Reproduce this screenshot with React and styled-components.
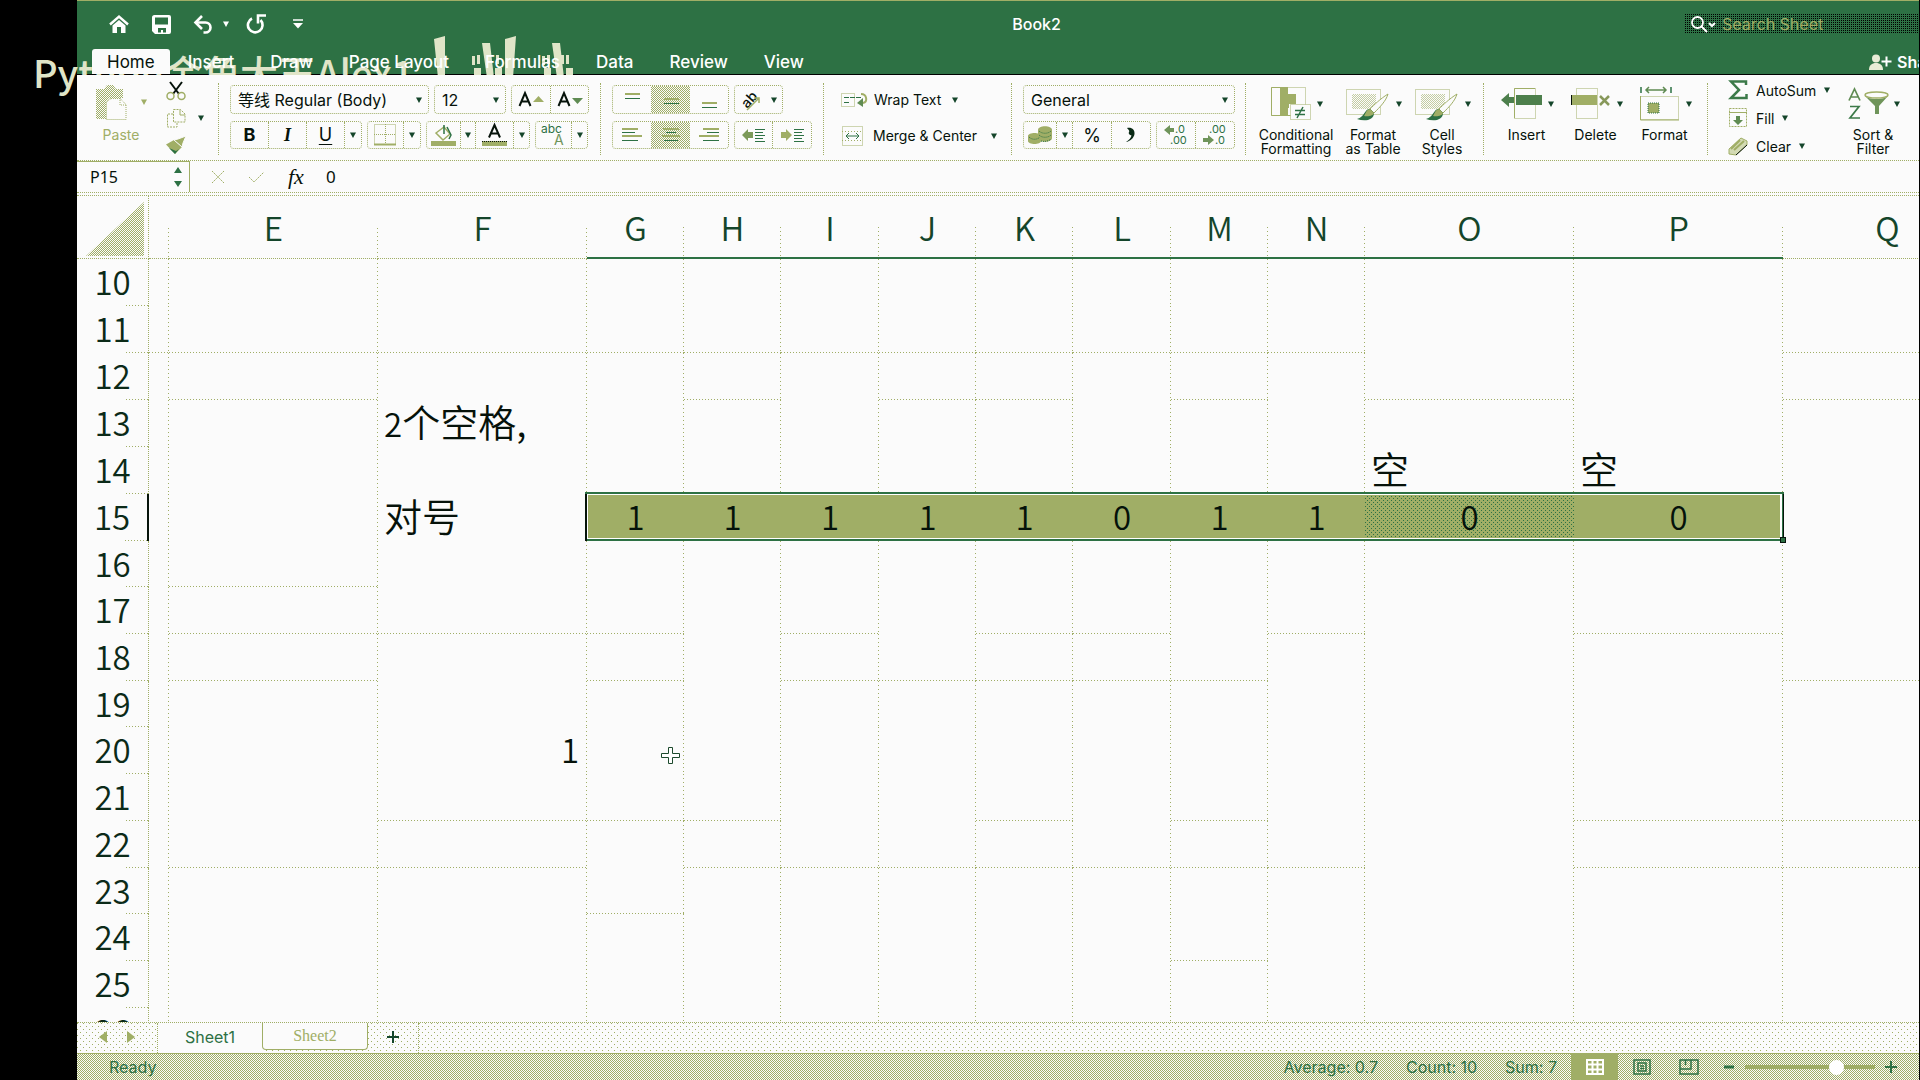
import React from "react";
import styled, { createGlobalStyle, css } from "styled-components";

const GREEN = "#2d7144";
const OLIVE = "#a0ae66";
const PAPER = "#fbfbfb";
const INK = "#06120a";

const UI = '"Inter", "Noto Sans CJK SC", sans-serif';
const SHEET = '"Noto Sans CJK SC", "Noto Sans", sans-serif';

const halftone = css`
  background-image: repeating-conic-gradient(${OLIVE} 0 25%, ${PAPER} 0 50%);
  background-size: 2px 2px;
`;
const speckle = css`
  background-image: conic-gradient(at 1px 1px, transparent 75%, ${OLIVE} 0),
    conic-gradient(at 1px 1px, transparent 75%, ${OLIVE} 0);
  background-size: 6px 6px;
  background-position: 0 0, 3px 3px;
`;

const Global = createGlobalStyle`
  *, *::before, *::after { box-sizing: border-box; }
  body { margin: 0; background: #000; overflow: hidden; }
  button, input, select { font: inherit; color: inherit; margin: 0; }
  button { padding: 0; border: 0; background: none; display: flex; align-items: center; justify-content: center; }
  svg { display: block; flex: none; overflow: visible; }
`;

const Screen = styled.div`
  position: relative;
  height: 100vh;
  padding: 0 1px 0 77px;
  background: #000;
  font-family: ${UI};
  color: ${INK};
`;
const Window = styled.div`
  height: 100%;
  display: flex;
  flex-direction: column;
  overflow: hidden;
  background: ${PAPER};
`;

/* ---------- title bar and tabs ---------- */
const Header = styled.header`
  background: ${GREEN};
  border-top: 1px solid ${OLIVE};
  border-bottom: 1px solid #000;
  color: #fff;
`;
const TitleBar = styled.div`
  display: grid;
  grid-template-columns: minmax(0, 100fr) auto minmax(0, 95fr);
  align-items: center;
  height: 46px;
  padding-left: 32px;
`;
const QuickAccess = styled.div`
  display: flex;
  align-items: center;
`;
const QuickButton = styled.button`
  width: ${(p) => p.$w || 20}px;
  height: 22px;
  margin-right: ${(p) => p.$gap || 0}px;
`;
const Title = styled.h1`
  margin: 0;
  font-size: 16px;
  font-weight: 500;
  line-height: 20px;
`;
const SearchBox = styled.label`
  justify-self: end;
  display: flex;
  align-items: center;
  gap: 6px;
  width: 234px;
  height: 20px;
  padding-left: 6px;
  background-image: conic-gradient(at 1px 1px, transparent 75%, #000 0);
  background-size: 2px 2px;
`;
const SearchInput = styled.input`
  min-width: 0;
  flex: 1;
  border: 0;
  padding: 0;
  background: none;
  font-size: 16px;
  line-height: 20px;
  color: ${OLIVE};
  &::placeholder { color: ${OLIVE}; opacity: 1; }
`;
const TabRow = styled.nav`
  position: relative;
  z-index: 2;
  display: flex;
  height: 27px;
  padding: 2px 0 0 15px;
`;
const Tab = styled.button`
  padding: 0 ${(p) => (p.$active ? 15 : 18)}px;
  font-size: 17px;
  font-weight: ${(p) => (p.$active ? 400 : 500)};
  line-height: 20px;
  ${(p) => p.$active && css`background: ${PAPER}; color: ${INK}; border-radius: 3px 3px 0 0;`}
`;
const ShareButton = styled.button`
  width: 50px;
  margin-left: auto;
  justify-content: flex-start;
  gap: 6px;
  overflow: hidden;
  font-size: 16px;
  font-weight: 600;
`;
const Watermark = styled.div`
  position: absolute;
  z-index: 1;
  left: 33px;
  top: 44px;
  display: flex;
  font-family: ${SHEET};
  font-size: 38px;
  font-weight: 500;
  line-height: 56px;
  color: #e0e5c8;
  white-space: nowrap;
  pointer-events: none;
`;
const Logo = styled.svg`
  position: absolute;
  left: 396px;
  top: -12px;
`;

/* ---------- ribbon ---------- */
const Ribbon = styled.div`
  position: relative;
  z-index: 2;
  display: flex;
  height: 86px;
  padding-top: 8px;
  background: ${PAPER};
  border-bottom: 1px dotted ${OLIVE};
  font-size: 14px;
  overflow: hidden;
`;
const Group = styled.div`
  display: flex;
  flex: none;
  align-items: flex-start;
  padding: 0 ${(p) => p.$right || 11}px 0 ${(p) => p.$left || 11}px;
  border-right: 1px dotted ${OLIVE};
  height: 72px;
  &:last-child { border-right: 0; }
`;
const Stack = styled.div`
  display: flex;
  flex-direction: column;
  gap: 7px;
  padding-top: 2px;
`;
const Line = styled.div`
  display: flex;
  gap: 5px;
  height: ${(p) => p.$h || 29}px;
`;
const ButtonGroup = styled.div`
  display: flex;
  border: 1px dotted ${OLIVE};
  border-radius: 4px;
`;
const Tool = styled.button`
  width: ${(p) => p.$w}px;
  font-size: 18px;
  ${(p) => p.$pressed && halftone}
  ${(p) => p.$line && css`border-right: 1px dotted ${OLIVE};`}
  b, i, u { line-height: 20px; }
  i { font-family: "Liberation Serif", serif; font-weight: 700; }
  u { text-underline-offset: 3px; }
`;
const SelectWrap = styled.span`
  position: relative;
  width: ${(p) => p.$w}px;
  svg { position: absolute; right: 7px; top: 12px; }
`;
const Select = styled.select`
  appearance: none;
  width: 100%;
  height: 29px;
  padding: 0 0 0 7px;
  border: 1px dotted ${OLIVE};
  border-radius: 4px;
  background: transparent;
  font-size: 16px;
`;
const PasteButton = styled.button`
  flex-direction: column;
  gap: 6px;
  padding-top: 1px;
  width: 52px;
  color: ${OLIVE};
`;
const PasteIcon = styled.span`
  display: flex;
  align-items: center;
  gap: 14px;
`;
const ClipColumn = styled.div`
  display: flex;
  flex-direction: column;
  gap: 7px;
  margin: -2px 0 0 19px;
  width: 41px;
`;
const ClipButton = styled.button`
  height: 20px;
  gap: 12px;
  justify-content: flex-start;
`;
const TextTool = styled.button`
  height: 29px;
  gap: ${(p) => p.$gap || 9}px;
  justify-content: flex-start;
  white-space: nowrap;
  svg:last-child { margin-left: 5px; }
`;
const BigTool = styled.button`
  flex-direction: column;
  justify-content: flex-start;
  width: ${(p) => p.$w}px;
  line-height: 14px;
  padding-top: 3px;
`;
const BigIcon = styled.span`
  display: flex;
  align-items: center;
  gap: 6px;
  height: 36px;
  margin: 0 0 6px 2px;
`;
const EditColumn = styled.div`
  display: flex;
  flex-direction: column;
  width: 114px;
  margin-top: -7px;
`;
const EditTool = styled.button`
  height: 28px;
  gap: 8px;
  justify-content: flex-start;
`;

/* ---------- formula bar ---------- */
const FormulaBar = styled.div`
  display: flex;
  align-items: center;
  height: 35px;
  border-bottom: 1px dotted ${OLIVE};
`;
const FormulaInner = styled.div`
  display: flex;
  align-items: center;
  flex: 1;
  height: 32px;
  margin-bottom: 2px;
  border-bottom: 1px dotted ${OLIVE};
`;
const NameBox = styled.label`
  display: flex;
  align-items: center;
  width: 113px;
  height: 100%;
  padding: 0 7px 0 13px;
  border: 1px solid ${OLIVE};
  border-width: 1px 1px 0 0;
`;
const NameInput = styled.input`
  min-width: 0;
  flex: 1;
  border: 0;
  padding: 0;
  background: none;
  font-family: "Noto Sans", sans-serif;
  font-size: 16px;
`;
const FormulaButtons = styled.div`
  display: flex;
  align-items: center;
  gap: 23px;
  padding: 0 22px 0 21px;
`;
const Fx = styled.span`
  font-family: "Liberation Serif", serif;
  font-style: italic;
  font-size: 22px;
  line-height: 24px;
`;
const FormulaInput = styled.input`
  flex: 1;
  border: 0;
  padding: 0;
  background: none;
  font-family: "Noto Sans", sans-serif;
  font-size: 17px;
`;

/* ---------- worksheet ---------- */
const SheetArea = styled.main`
  position: relative;
  flex: 1;
  min-height: 0;
  overflow: hidden;
`;
const Table = styled.table`
  table-layout: fixed;
  width: 1914px;
  border-collapse: separate;
  border-spacing: 0;
  font-family: ${SHEET};
  font-weight: 350;
  font-size: 33px;
  line-height: 40px;
`;
const ColHead = styled.th`
  height: 63px;
  padding: 0;
  font-weight: inherit;
  color: #14452a;
  border-bottom: ${(p) => (p.$on ? `2px solid ${GREEN}` : `1px dotted ${OLIVE}`)};
  background-image: repeating-linear-gradient(${OLIVE} 0 1px, transparent 1px 4px);
  background-size: 1px 30px;
  background-position: right bottom;
  background-repeat: no-repeat;
`;
const Corner = styled.th`
  padding: 0 4px 2px;
  vertical-align: bottom;
  border-right: 1px dotted ${OLIVE};
  border-bottom: 1px dotted ${OLIVE};
`;
const Triangle = styled.div`
  height: 54px;
  margin-left: 5px;
  clip-path: polygon(100% 0, 100% 100%, 0 100%);
  ${halftone}
`;
const RowHead = styled.th`
  height: ${(p) => p.$h}px;
  padding: 0 0 3px;
  font-weight: inherit;
  color: #0b2a18;
  border-right: ${(p) => (p.$on ? "2px solid #06140b" : `1px dotted ${OLIVE}`)};
  background-image: repeating-linear-gradient(90deg, ${OLIVE} 0 1px, transparent 1px 3px);
  background-size: 22px 1px;
  background-position: right bottom;
  background-repeat: no-repeat;
`;
const Cell = styled.td`
  padding: 0 8px 3px 6px;
  text-align: ${(p) => p.$align || "left"};
  white-space: nowrap;
  background-image: repeating-linear-gradient(${OLIVE} 0 1px, transparent 1px 4px),
    repeating-linear-gradient(90deg, ${OLIVE} 0 1px, transparent 1px 3px);
  background-size: 1px 100%, ${(p) => (p.$rule ? "100%" : "0")} 1px;
  background-position: right top, left bottom;
  background-repeat: no-repeat;
`;
const Picked = styled.td`
  position: relative;
  padding: 0 0 3px;
  text-align: center;
  background-color: ${OLIVE};
  color: #04120a;
  ${(p) =>
    p.$shade &&
    css`
      background-image: conic-gradient(at 1px 1px, transparent 75%, ${GREEN} 0),
        conic-gradient(at 1px 1px, transparent 75%, ${GREEN} 0);
      background-size: 4px 4px;
      background-position: 0 0, 2px 2px;
    `}
  box-shadow: 0 -2px ${GREEN}, inset 0 -2px ${GREEN},
    ${(p) => p.$edge === "first" && `-2px 0 #06140b, -2px -2px ${GREEN}, `}
    ${(p) => p.$edge === "last" && `1px 0 #06140b, 1px -2px ${GREEN}, inset -1px 0 ${GREEN}, `}
    ${(p) => p.$edge === "first" && "inset 1px 0 #fff, "}
    ${(p) => p.$edge === "last" && "inset -3px 0 #fff, "}
    inset 0 1px #fff, inset 0 -3px #fff;
`;
const FillHandle = styled.i`
  position: absolute;
  right: -3px;
  bottom: -2px;
  width: 6px;
  height: 6px;
  background: ${GREEN};
  border: 1px solid #06140b;
`;
const Han = styled.span`
  font-size: 38px;
`;
const Pointer = styled.svg`
  position: absolute;
  left: 584px;
  top: 550px;
`;

/* ---------- sheet tabs and status bar ---------- */
const SheetTabs = styled.div`
  display: flex;
  flex: none;
  height: 31px;
  border-top: 1px dotted ${OLIVE};
  ${speckle}
`;
const SheetNav = styled.div`
  display: flex;
  align-items: center;
  gap: 20px;
  width: 81px;
  padding: 0 0 2px 22px;
  border-right: 1px dotted ${OLIVE};
`;
const SheetTab = styled.button`
  width: ${(p) => (p.$active ? 106 : 104)}px;
  height: ${(p) => (p.$active ? 27 : 30)}px;
  padding-bottom: 2px;
  font-size: 16px;
  color: ${GREEN};
  background: ${PAPER};
  ${(p) =>
    p.$active &&
    css`
      padding-bottom: 0;
      font-family: "Liberation Serif", serif;
      color: ${OLIVE};
      border: 1px solid ${OLIVE};
      border-top: 0;
      border-radius: 0 0 4px 4px;
    `}
`;
const AddSheet = styled.button`
  width: 51px;
  padding-bottom: 2px;
  border-right: 1px dotted ${OLIVE};
`;
const StatusBar = styled.footer`
  display: flex;
  flex: none;
  align-items: center;
  height: 27px;
  padding: 0 22px 0 32px;
  border-top: 1px solid ${OLIVE};
  ${halftone}
  font-size: 16px;
  color: ${GREEN};
`;
const Totals = styled.div`
  display: flex;
  gap: 28px;
  margin: 0 14px 0 auto;
`;
const ViewButton = styled.button`
  width: 47px;
  height: 26px;
  ${(p) => p.$active && css`background: ${OLIVE};`}
`;
const ZoomGroup = styled.div`
  display: flex;
  align-items: center;
  gap: 10px;
  margin-left: 11px;
`;
const Zoom = styled.input`
  appearance: none;
  width: 130px;
  height: 16px;
  background: linear-gradient(${OLIVE}, ${OLIVE}) center / 100% 4px no-repeat;
  &::-webkit-slider-thumb {
    appearance: none;
    width: 15px;
    height: 15px;
    border-radius: 50%;
    background: #fff;
  }
`;

/* ---------- drawings ---------- */
const Caret = ({ c = "#14452a" }) => (
  <svg width="6" height="6" viewBox="0 0 6 6"><path d="M0 0.5h6L3 6z" fill={c} /></svg>
);
const I = ({ w, h, children, ...r }) => (
  <svg width={w} height={h} viewBox={`0 0 ${w} ${h}`} fill="none" aria-hidden="true" {...r}>{children}</svg>
);
const Bars = ({ rows, c = GREEN }) => (
  <I w={20} h={16}>
    {rows.map(([x1, x2, y], i) => <path key={i} d={`M${x1} ${y}H${x2}`} stroke={i % 2 ? c : OLIVE} strokeWidth={i % 2 ? 1 : 2} />)}
  </I>
);
const Frame = ({ x, y, w, h }) => (
  <rect x={x + 0.5} y={y + 0.5} width={w} height={h} stroke={OLIVE} strokeDasharray="1 1" />
);
const HomeIcon = () => (
  <I w={20} h={18}><path d="M1 9.5L10 1.5l9 8" stroke="#fff" strokeWidth="2.4" /><path d="M3.5 10.5L10 5l6.5 5.5V18H12v-6H8v6H3.500z" fill="#fff" /></I>
);
const SaveIcon = () => (
  <I w={19} h={19}><path d="M2.500 0H17a2 2 0 012 2v15a2 2 0 01-2 2H3l-3-3V2.500A2.500 2.500 0 012.500 0z" fill="#fff" /><path d="M3 2.500h13v7H3zM6 13h8v4.500H11V15H9v2.500H6z" fill={GREEN} /></I>
);
const UndoIcon = () => (
  <I w={20} h={19}><path d="M3 7.500h9.500a5 5 0 010 10H10.500" stroke="#fff" strokeWidth="2.600" /><path d="M9 1L2.500 7.500 9 14" stroke="#fff" strokeWidth="2.600" /></I>
);
const RedoIcon = () => (
  <I w={20} h={20}><path d="M5 4.500a7.300 7.300 0 108.500 1.500" stroke="#fff" strokeWidth="2.600" /><path d="M19 1.500h-8v8" stroke="#fff" strokeWidth="2.600" /></I>
);
const MoreIcon = () => (
  <I w={10} h={10}><path d="M0 1h10" stroke="#fff" strokeWidth="1.500" /><path d="M0 4h10L5 9.500z" fill="#fff" /></I>
);
const SearchIcon = () => (
  <I w={25} h={17}><circle cx="6.500" cy="6.500" r="5.500" stroke="#fff" strokeWidth="1.800" /><path d="M10.500 10.500L16 16" stroke="#fff" strokeWidth="2" /><path d="M18 7l3 3 3-3" stroke="#fff" strokeWidth="2" /></I>
);
const ShareIcon = () => (
  <I w={22} h={16}><circle cx="7" cy="4.500" r="4" fill="#e8ecd6" /><path d="M0 16c0-5 3-7 7-7s7 2 7 7z" fill="#e8ecd6" /><path d="M17.500 2.500v10M12.500 7.500h10" stroke="#fff" strokeWidth="2" /></I>
);
const Clipboard = () => (
  <I w={32} h={36}><defs><pattern id="dots" width="2" height="2" patternUnits="userSpaceOnUse"><rect width="1" height="1" fill={OLIVE} /><rect x="1" y="1" width="1" height="1" fill={OLIVE} /></pattern></defs>
    <path d="M1 5h8l3-4h6l3 4h7v9H15l-4 4v17H1z" fill="url(#dots)" /><path d="M16 14.500h9l6 6v15H11.500V18z" fill={PAPER} stroke={OLIVE} strokeDasharray="1 1" /><path d="M25 14v7h6" stroke={OLIVE} strokeDasharray="1 1" /></I>
);
const Scissors = () => (
  <I w={20} h={20}><path d="M4 1l9 12M16 1L7 13" stroke={INK} strokeWidth="2" /><circle cx="4.500" cy="15" r="3.500" stroke={OLIVE} strokeWidth="1.500" /><circle cx="15.500" cy="15" r="3.500" stroke={OLIVE} strokeWidth="1.500" /></I>
);
const Copy = () => (
  <I w={20} h={20}><path d="M7.500 1.500h7l4.500 4.500v8H7.500zM7 6H1.500v13H11v-4" stroke={OLIVE} strokeDasharray="2 1" /><path d="M14 2v5h5" stroke={OLIVE} /></I>
);
const Brush = () => (
  <I w={22} h={18}><path d="M0 8.500L8 4l8 7-7 7z" fill={OLIVE} /><path d="M3 12l7 3 3-2-4 5z" fill={GREEN} /><path d="M8 4l4-1 8-3-3 7-1 4z" fill={OLIVE} stroke={PAPER} /></I>
);
const GrowA = ({ up }) => (
  <I w={26} h={20}><path d="M1.500 16L7 3l5.500 13M3.500 11.500h7" stroke={INK} strokeWidth="2" /><path d={up ? "M15 12l5.500-6 5.500 6z" : "M15 8l5.500 6L26 8z"} fill={up ? OLIVE : "#5f8b52"} /></I>
);
const BorderIcon = () => (
  <I w={23} h={22}><Frame x={0} y={0} w={21} h={20} /><path d="M11.500 0v20M0 10.500h22" stroke={OLIVE} strokeDasharray="1 1" /><path d="M0 20.500h22" stroke={OLIVE} strokeWidth="2" /></I>
);
const BucketIcon = () => (
  <I w={25} h={22}><path d="M5 9l8-6 6 7-7 6z" stroke={OLIVE} strokeWidth="1.500" /><path d="M13 1v9M16 3l4 8-2 4" stroke={GREEN} strokeWidth="1.500" /><rect y="17" width="25" height="5" fill={OLIVE} /></I>
);
const FontColor = () => (
  <I w={25} h={22}><path d="M7 13.500L12.500 1 18 13.500M9 9.500h7" stroke={INK} strokeWidth="2" /><rect y="17" width="25" height="5" fill={OLIVE} /><path d="M0 17.500h25" stroke={INK} strokeDasharray="1 1" /></I>
);
const AngleIcon = () => (
  <I w={24} h={24}><text x="3" y="17" fontSize="14" fontWeight="500" fill={INK} transform="rotate(-48 10 13)">ab</text><path d="M8 22L20 10M15 10h5v5" stroke={OLIVE} strokeWidth="1.500" /></I>
);
const Indent = ({ right }) => (
  <I w={23} h={14}><path d={right ? "M0 4h5V1l6 6-6 6v-3H0z" : "M11 4H6V1L0 7l6 6v-3h5z"} fill={right ? OLIVE : "#7c9a5a"} /><path d="M13 1.500h10M13 4.500h8M13 7.500h10M13 10.500h8M13 13.500h10" stroke={GREEN} /></I>
);
const WrapIcon = () => (
  <I w={27} h={16}><Frame x={0} y={1} w={13} h={13} /><path d="M3 5.500h18M3 10.500h6" stroke={GREEN} strokeDasharray="5 1" /><path d="M20 2c6 0 7 8 2 9" stroke={OLIVE} strokeWidth="2" /><path d="M22 6v9l-6-4z" fill="#5f8b52" /></I>
);
const MergeIcon = () => (
  <I w={23} h={20}><Frame x={1} y={0} w={20} h={19} /><path d="M1 5.500h21M1 14.500h21" stroke={OLIVE} strokeDasharray="1 2" /><path d="M5 10h13M8 7l-3 3 3 3M15 7l3 3-3 3" stroke={GREEN} /></I>
);
const Coins = () => (
  <I w={25} h={18}><path d="M10 4c0-5 14-5 14 0v8c0 5-14 5-14 0z" fill={OLIVE} /><path d="M0 10c0-4 13-4 13 0v5c0 4-13 4-13 0z" fill={OLIVE} /><path d="M11 5c3 3 9 3 12 0M11 9c3 3 9 3 12 0M1 11c3 3 8 3 11 0M13 15c4 1 8 0 10-2" stroke={GREEN} strokeDasharray="1 1" /></I>
);
const CommaIcon = () => (
  <I w={10} h={14}><path d="M1 0c5-1 8 2 7.500 6C8 10 4 13.500 0 14c3-2 5-4 5.500-6.500C4 7 2 6 3 4 4 3 2 1 1 0z" fill="#0a2a16" /></I>
);
const Decimals = ({ more }) => (
  <I w={24} h={20}><text x={more ? 11 : 6} y="8" fontSize="11" fill={GREEN}>{more ? ".0" : ".00"}</text><text x={more ? 6 : 12} y="19" fontSize="11" fill={GREEN}>{more ? ".00" : ".0"}</text>
    <path d={more ? "M10 3H6V0L0 5l6 5V7h4z" : "M0 13h5v-3l6 5-6 5v-3H0z"} fill="#6f945a" /></I>
);
const CondIcon = () => (
  <I w={40} h={34}><path d="M.5 28.500V.5H9" stroke={OLIVE} /><path d="M.5 28.500H20" stroke={OLIVE} /><Frame x={0} y={0} w={34} h={28} /><path d="M9 0h8v7h8v10h-7v4h-1v8H9z" fill={OLIVE} /><rect x="19.500" y="17.500" width="20" height="15" fill={PAPER} stroke={OLIVE} strokeDasharray="1 1" /><path d="M24 23.500h10M24 27.500h10M32 20l-6 11" stroke={GREEN} strokeWidth="1.500" /></I>
);
const TableBrush = () => (
  <I w={44} h={34}><Frame x={0} y={2} w={34} h={25} /><rect x="6" y="7" width="24" height="15" fill="url(#dots)" opacity=".6" /><path d="M42 7C34 12 28 18 24 22l4 4C34 20 40 14 42 7z" fill={PAPER} stroke={OLIVE} /><path d="M24 22c-6 0-5 8-13 10 8 3 17 1 17-6z" fill={GREEN} /><path d="M24 22c-4 1-4 4-6 7 5 1 10-1 10-3z" fill={OLIVE} /></I>
);
const InsertIcon = () => (
  <I w={41} h={32}><path d="M13.500 30V.5H34" stroke={OLIVE} /><Frame x={13} y={0} w={21} h={30} /><rect x="15" y="7" width="26" height="10" fill="#4d7f4c" /><path d="M13 9H8V5L0 12l8 7v-4h5z" fill="#4d7f4c" /></I>
);
const DeleteIcon = () => (
  <I w={40} h={32}><Frame x={5} y={0} w={21} h={30} /><rect x="1" y="7" width="25" height="10" fill={OLIVE} /><path d="M.5 7v10" stroke={INK} /><path d="M29 8l9 9M38 8l-9 9" stroke="#87985a" strokeWidth="2.500" /></I>
);
const FormatIcon = () => (
  <I w={40} h={34}><path d="M1 0v6M31 0v6" stroke={GREEN} strokeWidth="1.500" /><path d="M6 3h20M9 0L6 3l3 3M23 0l3 3-3 3" stroke="#5f8b52" strokeWidth="1.500" /><Frame x={0} y={9} w={38} h={23} /><path d="M.5 9v24H39" stroke={OLIVE} /><rect x="8" y="16" width="11" height="10" fill={OLIVE} stroke={GREEN} strokeDasharray="1 1" /></I>
);
const SigmaIcon = () => (
  <I w={19} h={20}><path d="M17 5V1.500H2L10 10l-8 8h15.500V14" stroke="#3c7a49" strokeWidth="2.500" /></I>
);
const FillIcon = () => (
  <I w={19} h={20}><rect x=".5" y=".5" width="17" height="18" stroke={OLIVE} strokeDasharray="2 1" /><path d="M0 4.500h18" stroke={OLIVE} /><path d="M7 8h4v4h3l-5 5-5-5h3z" fill="#5f8b52" /></I>
);
const EraserIcon = () => (
  <I w={19} h={19}><path d="M0 12L12 1l6 3v4L7 18 0 17z" fill="#d3dab4" stroke={OLIVE} /><path d="M2 12L11 3M5 13L15 4" stroke={OLIVE} strokeWidth="2" /><path d="M18 8L7 18" stroke={INK} /></I>
);
const SortIcon = () => (
  <I w={40} h={32}><path d="M1 12.500L6.500 1 12 12.500M3 9h7" stroke="#5f8b52" strokeWidth="1.700" /><path d="M2 18.500h9L2 30h10" stroke="#3c7a49" strokeWidth="1.700" /><path d="M17 8c4 4 19 4 23 0l-9 10v8h-4v-8z" fill="#6f945a" /><ellipse cx="28.500" cy="7" rx="11.500" ry="3" fill={PAPER} stroke={OLIVE} strokeWidth="1.500" /></I>
);
const Grid = ({ c }) => (
  <I w={18} h={16}><path d="M1 1h16v14H1zM1 5.500h16M1 10.500h16M6.500 1v14M11.500 1v14" stroke={c} strokeWidth="2" /></I>
);

/* ---------- data ---------- */
const COLUMNS = [
  ["D", 20], ["E", 209], ["F", 209], ["G", 97], ["H", 97], ["I", 98], ["J", 97],
  ["K", 97], ["L", 98], ["M", 97], ["N", 97], ["O", 209], ["P", 209], ["Q", 209],
];
const ROWS = Array.from({ length: 17 }, (_, i) => i + 10);
const SHORT_ROWS = [16, 19, 23];
const RULES = {
  11: "DEFGHIJKLMNQ", 12: "EHJKMOQ", 16: "E", 17: "EFGIKLNP", 18: "EGIJKLMQ",
  21: "FGHKMPQ", 22: "EFHIJKLMNPQ", 23: "G", 24: "M",
};
const SELECTED = { G: 1, H: 1, I: 1, J: 1, K: 1, L: 0, M: 1, N: 1, O: 0, P: 0 };
const CELLS = {
  F13: <>2<Han>个空格,</Han></>,
  F15: <Han>对号</Han>,
  O14: <Han>空</Han>,
  P14: <Han>空</Han>,
  F20: 1,
};
const TABS = ["Home", "Insert", "Draw", "Page Layout", "Formulas", "Data", "Review", "View"];

function RibbonBar() {
  return (
    <Ribbon role="toolbar" aria-label="Home">
      <Group $left={18}>
        <PasteButton><PasteIcon><Clipboard /><Caret c={OLIVE} /></PasteIcon><span>Paste</span></PasteButton>
        <ClipColumn>
          <ClipButton aria-label="Cut"><Scissors /></ClipButton>
          <ClipButton aria-label="Copy"><Copy /><Caret /></ClipButton>
          <ClipButton aria-label="Format painter"><Brush /></ClipButton>
        </ClipColumn>
      </Group>
      <Group>
        <Stack>
          <Line>
            <SelectWrap $w={199}>
              <Select aria-label="Font"><option>等线 Regular (Body)</option></Select><Caret />
            </SelectWrap>
            <SelectWrap $w={72}>
              <Select aria-label="Font size"><option>12</option></Select><Caret />
            </SelectWrap>
            <ButtonGroup>
              <Tool $w={39} $line aria-label="Increase font size"><GrowA up /></Tool>
              <Tool $w={37} aria-label="Decrease font size"><GrowA /></Tool>
            </ButtonGroup>
          </Line>
          <Line $h={28}>
            <ButtonGroup>
              <Tool $w={38} $line aria-label="Bold"><b>B</b></Tool>
              <Tool $w={38} $line aria-label="Italic"><i>I</i></Tool>
              <Tool $w={38} $line aria-label="Underline"><u>U</u></Tool>
              <Tool $w={16} aria-label="Underline options"><Caret /></Tool>
            </ButtonGroup>
            <ButtonGroup>
              <Tool $w={36} $line aria-label="Borders"><BorderIcon /></Tool>
              <Tool $w={16} aria-label="Border options"><Caret /></Tool>
            </ButtonGroup>
            <ButtonGroup>
              <Tool $w={34} $line aria-label="Fill color"><BucketIcon /></Tool>
              <Tool $w={15} $line aria-label="Fill color options"><Caret /></Tool>
              <Tool $w={38} $line aria-label="Font color"><FontColor /></Tool>
              <Tool $w={15} aria-label="Font color options"><Caret /></Tool>
            </ButtonGroup>
            <ButtonGroup>
              <Tool $w={36} $line aria-label="Phonetic guide">
                <I w={26} h={22}><text x="0" y="9" fontSize="12" fill={GREEN}>abc</text><text x="13" y="21" fontSize="14" fill="#6f945a">A</text></I>
              </Tool>
              <Tool $w={15} aria-label="Phonetic options"><Caret /></Tool>
            </ButtonGroup>
          </Line>
        </Stack>
      </Group>
      <Group>
        <Stack>
          <Line>
            <ButtonGroup>
              <Tool $w={38} aria-label="Align top"><Bars rows={[[3, 18, 2], [3, 18, 6.5]]} /></Tool>
              <Tool $w={39} $pressed aria-label="Align middle"><Bars rows={[[3, 18, 7], [3, 18, 11.5]]} /></Tool>
              <Tool $w={38} aria-label="Align bottom"><Bars rows={[[3, 18, 11], [3, 18, 15.5]]} /></Tool>
            </ButtonGroup>
            <ButtonGroup>
              <Tool $w={31} aria-label="Orientation"><AngleIcon /></Tool>
              <Tool $w={16} aria-label="Orientation options"><Caret /></Tool>
            </ButtonGroup>
          </Line>
          <Line $h={28}>
            <ButtonGroup>
              <Tool $w={38} aria-label="Align left"><Bars rows={[[0, 16, 2], [0, 13, 5.5], [0, 20, 9], [0, 16, 13.5]]} /></Tool>
              <Tool $w={39} $pressed aria-label="Center"><Bars rows={[[2, 18, 2], [5, 15, 5.5], [1, 19, 9], [3, 17, 13.5]]} /></Tool>
              <Tool $w={38} aria-label="Align right"><Bars rows={[[4, 20, 2], [8, 20, 5.5], [0, 20, 9], [4, 20, 13.5]]} /></Tool>
            </ButtonGroup>
            <ButtonGroup>
              <Tool $w={38} $line aria-label="Decrease indent"><Indent /></Tool>
              <Tool $w={38} aria-label="Increase indent"><Indent right /></Tool>
            </ButtonGroup>
          </Line>
        </Stack>
      </Group>
      <Group $left={17} $right={14}>
        <Stack>
          <TextTool $gap={6}><WrapIcon />Wrap Text <Caret /></TextTool>
          <TextTool $gap={9}><MergeIcon />Merge &amp; Center <Caret /></TextTool>
        </Stack>
      </Group>
      <Group $right={10}>
        <Stack>
          <Line>
            <SelectWrap $w={212}>
              <Select aria-label="Number format"><option>General</option></Select><Caret />
            </SelectWrap>
          </Line>
          <Line $h={28}>
            <ButtonGroup>
              <Tool $w={33} $line aria-label="Currency"><Coins /></Tool>
              <Tool $w={16} $line aria-label="Currency options"><Caret /></Tool>
              <Tool $w={39} $line aria-label="Percent">%</Tool>
              <Tool $w={38} aria-label="Comma style"><CommaIcon /></Tool>
            </ButtonGroup>
            <ButtonGroup>
              <Tool $w={39} $line aria-label="Increase decimal"><Decimals more /></Tool>
              <Tool $w={38} aria-label="Decrease decimal"><Decimals /></Tool>
            </ButtonGroup>
          </Line>
        </Stack>
      </Group>
      <Group $left={8} $right={7}>
        <BigTool $w={84}><BigIcon><CondIcon /><Caret /></BigIcon>Conditional<br />Formatting</BigTool>
        <BigTool $w={70}><BigIcon><TableBrush /><Caret /></BigIcon>Format<br />as Table</BigTool>
        <BigTool $w={68}><BigIcon><TableBrush /><Caret /></BigIcon>Cell<br />Styles</BigTool>
      </Group>
      <Group $left={8} $right={8}>
        <BigTool $w={69}><BigIcon><InsertIcon /><Caret /></BigIcon>Insert</BigTool>
        <BigTool $w={69}><BigIcon><DeleteIcon /><Caret /></BigIcon>Delete</BigTool>
        <BigTool $w={69}><BigIcon><FormatIcon /><Caret /></BigIcon>Format</BigTool>
      </Group>
      <Group $left={21} $right={4}>
        <EditColumn>
          <EditTool><SigmaIcon />AutoSum <Caret /></EditTool>
          <EditTool><FillIcon />Fill <Caret /></EditTool>
          <EditTool><EraserIcon />Clear <Caret /></EditTool>
        </EditColumn>
        <BigTool $w={60}><BigIcon><SortIcon /><Caret /></BigIcon>Sort &amp;<br />Filter</BigTool>
      </Group>
    </Ribbon>
  );
}

function Worksheet() {
  return (
    <SheetArea>
      <Table>
        <colgroup>
          <col width="72" />
          {COLUMNS.map(([c, w]) => <col key={c} width={w} />)}
        </colgroup>
        <thead>
          <tr>
            <Corner><Triangle /></Corner>
            {COLUMNS.map(([c]) => (
              <ColHead key={c} scope="col" $on={c in SELECTED}>{c === "D" ? "" : c}</ColHead>
            ))}
          </tr>
        </thead>
        <tbody>
          {ROWS.map((r) => (
            <tr key={r}>
              <RowHead scope="row" $h={SHORT_ROWS.includes(r) ? 46 : 47} $on={r === 15}>{r}</RowHead>
              {COLUMNS.map(([c]) =>
                r === 15 && c in SELECTED ? (
                  <Picked key={c} $shade={c === "O"} $edge={c === "G" ? "first" : c === "P" ? "last" : ""}>
                    {SELECTED[c]}{c === "P" && <FillHandle />}
                  </Picked>
                ) : (
                  <Cell key={c} $rule={(RULES[r] || "").includes(c)} $align={c + r === "F20" ? "right" : "left"}>
                    {CELLS[c + r]}
                  </Cell>
                )
              )}
            </tr>
          ))}
        </tbody>
      </Table>
      <Pointer width="20" height="20" viewBox="0 0 20 20">
        <path d="M7.500 1.500h4v6h7v4h-7v6h-4v-6h-7v-4h7z" fill="#fff" stroke="#1d4a2d" />
      </Pointer>
    </SheetArea>
  );
}

export default function App() {
  return (
    <Screen>
      <Global />
      <Watermark>
        Python金角大王Alex1
        <Logo width="150" height="46" viewBox="0 0 150 46" fill="#e0e5c8">
          <path d="M5 7L16 4v42H9zM53 11h8l4 35h-7zM76 7l11-3-3 42h-8zM123 11h8l4 35h-7z" />
          <path d="M43 24h3v9h-3zM48 23h3v9h-3zM67 23h3v9h-3zM113 24h3v9h-3zM118 23h3v9h-3zM132 23h3v9h-3zM137 23h3v9h-3zM45 36h7v10h-7zM66 36h7v10h-7zM115 36h7v10h-7zM137 36h7v10h-7z" />
        </Logo>
      </Watermark>
      <Window>
        <Header>
          <TitleBar>
            <QuickAccess>
              <QuickButton $gap={22} aria-label="Home"><HomeIcon /></QuickButton>
              <QuickButton $gap={22} aria-label="Save"><SaveIcon /></QuickButton>
              <QuickButton $gap={10} aria-label="Undo"><UndoIcon /></QuickButton>
              <QuickButton $w={6} $gap={18} aria-label="Undo options"><Caret c="#fff" /></QuickButton>
              <QuickButton $gap={26} aria-label="Repeat"><RedoIcon /></QuickButton>
              <QuickButton $w={10} aria-label="Customize"><MoreIcon /></QuickButton>
            </QuickAccess>
            <Title>Book2</Title>
            <SearchBox>
              <SearchIcon />
              <SearchInput aria-label="Search Sheet" placeholder="Search Sheet" />
            </SearchBox>
          </TitleBar>
          <TabRow>
            {TABS.map((t) => <Tab key={t} $active={t === "Home"}>{t}</Tab>)}
            <ShareButton><ShareIcon />Share</ShareButton>
          </TabRow>
        </Header>
        <RibbonBar />
        <FormulaBar>
          <FormulaInner>
            <NameBox>
              <NameInput aria-label="Name box" defaultValue="P15" />
              <I w={8} h={20}><path d="M0 6l4-6 4 6zM0 14l4 6 4-6z" fill={GREEN} /></I>
            </NameBox>
            <FormulaButtons>
              <button aria-label="Cancel"><I w={14} h={14}><path d="M1 1l12 12M13 1L1 13" stroke={OLIVE} strokeDasharray="2 1" /></I></button>
              <button aria-label="Enter"><I w={17} h={12}><path d="M1 6l5 5L16 1" stroke={OLIVE} strokeDasharray="2 1" /></I></button>
              <button aria-label="Insert function"><Fx>fx</Fx></button>
            </FormulaButtons>
            <FormulaInput aria-label="Formula" defaultValue="0" />
          </FormulaInner>
        </FormulaBar>
        <Worksheet />
        <SheetTabs>
          <SheetNav>
            <button aria-label="Previous sheet"><I w={8} h={12}><path d="M8 0v12L0 6z" fill={OLIVE} /></I></button>
            <button aria-label="Next sheet"><I w={8} h={12}><path d="M0 0v12l8-6z" fill={OLIVE} /></I></button>
          </SheetNav>
          <SheetTab>Sheet1</SheetTab>
          <SheetTab $active>Sheet2</SheetTab>
          <AddSheet aria-label="Add sheet"><I w={14} h={14}><path d="M7 1v12M1 7h12" stroke="#14452a" strokeWidth="2" /></I></AddSheet>
        </SheetTabs>
        <StatusBar>
          <span>Ready</span>
          <Totals><span>Average: 0.7</span><span>Count: 10</span><span>Sum: 7</span></Totals>
          <ViewButton $active aria-label="Normal view"><Grid c="#fff" /></ViewButton>
          <ViewButton aria-label="Page layout view"><I w={18} h={16}><path d="M1 1h16v14H1zM5 4h8v8H5zM7 7h4M7 9.500h4" stroke={GREEN} strokeWidth="1.500" /></I></ViewButton>
          <ViewButton aria-label="Page break view"><I w={20} h={16}><path d="M1 1h18v14H1zM1 10h11V1M6.500 1v5" stroke={GREEN} strokeWidth="1.500" /></I></ViewButton>
          <ZoomGroup>
            <button aria-label="Zoom out"><I w={12} h={12}><path d="M1 6h10" stroke={GREEN} strokeWidth="3" /></I></button>
            <Zoom type="range" aria-label="Zoom" min="0" max="100" defaultValue="73" />
            <button aria-label="Zoom in"><I w={12} h={12}><path d="M0 6h12M6 0v12" stroke={GREEN} strokeWidth="2" /></I></button>
          </ZoomGroup>
        </StatusBar>
      </Window>
    </Screen>
  );
}
